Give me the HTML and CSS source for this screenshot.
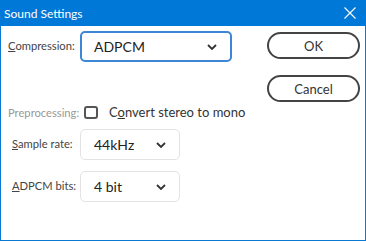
FILE: index.html
```html
<!DOCTYPE html>
<html lang="en">
<head>
  <meta charset="UTF-8">
  <title>Sound Settings</title>
  <link rel="stylesheet" href="styles.css">
</head>
<body>
  <div class="window">
    <div class="titlebar">
      <span class="title">Sound Settings</span>
      <svg class="close" width="12" height="12" viewBox="0 0 12 12">
        <path d="M0.5 0.5 L11.5 11.5 M11.5 0.5 L0.5 11.5" stroke="#fff" stroke-width="1.1" fill="none"/>
      </svg>
    </div>

    <div class="content">
      <div class="form">
        <div class="row row-compression">
          <span class="label"><u>C</u>ompression:</span>
          <div class="select select-focus">
            <span>ADPCM</span>
            <svg class="chevron" width="10" height="6" viewBox="0 0 10 6"><path d="M1 1 L5 5 L9 1" stroke="#333" stroke-width="1.8" fill="none"/></svg>
          </div>
        </div>

        <div class="row row-check">
          <span class="label label-disabled">Preprocessing:</span>
          <span class="checkbox"></span>
          <span class="check-text">C<u>o</u>nvert stereo to mono</span>
        </div>

        <div class="row row-rate">
          <span class="label label-indent"><u>S</u>ample rate:</span>
          <div class="select select-small">
            <span>44kHz</span>
            <svg class="chevron" width="10" height="6" viewBox="0 0 10 6"><path d="M1 1 L5 5 L9 1" stroke="#333" stroke-width="1.8" fill="none"/></svg>
          </div>
        </div>

        <div class="row row-bits">
          <span class="label label-indent"><u>A</u>DPCM bits:</span>
          <div class="select select-small">
            <span>4 bit</span>
            <svg class="chevron" width="10" height="6" viewBox="0 0 10 6"><path d="M1 1 L5 5 L9 1" stroke="#333" stroke-width="1.8" fill="none"/></svg>
          </div>
        </div>
      </div>

      <div class="buttons">
        <button class="btn">OK</button>
        <button class="btn">Cancel</button>
      </div>
    </div>
  </div>
</body>
</html>
```

FILE: styles.css
```css
html, body {
  margin: 0;
  padding: 0;
}

body {
  font-family: "Lato", "Open Sans", sans-serif;
  font-size: 12px;
  color: #333;
  background: #fff;
}

.window {
  width: 366px;
  height: 241px;
  box-sizing: border-box;
  border: 1px solid #0a79d1;
  border-top: none;
  display: flex;
  flex-direction: column;
}

.titlebar {
  height: 26px;
  margin: 0 -1px;
  background: #0078d7;
  color: #fff;
  display: flex;
  align-items: center;
  justify-content: space-between;
  padding: 0 10px 0 4px;
  font-size: 12px;
}

.close {
  display: block;
}

.content {
  display: flex;
  justify-content: space-between;
}

.form {
  display: flex;
  flex-direction: column;
  padding-top: 5px;
}

.row {
  display: flex;
}

.label {
  width: 72px;
  padding-left: 7px;
  padding-top: 8px;
  font-size: 11.2px;
  color: #444;
  white-space: nowrap;
}

.label-indent {
  padding-left: 11px;
  width: 68px;
}

.label-disabled {
  color: #999;
  padding-top: 0;
}

.select {
  box-sizing: border-box;
  display: flex;
  align-items: center;
  justify-content: space-between;
  padding: 0 13px 0 12px;
  font-size: 14px;
  color: #222;
  border-radius: 5px;
}

.select-focus {
  width: 152px;
  height: 31px;
  border: 2px solid #3d86d6;
}

.select-small {
  width: 100px;
  height: 31px;
  border: 1px solid #e3e3e3;
  padding-left: 13px;
}

.row-check {
  margin-top: 37px;
  height: 26px;
  align-items: center;
}

.checkbox {
  box-sizing: border-box;
  width: 14px;
  height: 13px;
  border: 2px solid #555;
  border-radius: 3px;
  margin-left: 4px;
}

.check-text {
  margin-left: 11px;
  font-size: 13px;
  color: #333;
  white-space: nowrap;
}

.row-rate {
  margin-top: 4px;
}

.row-bits {
  margin-top: 11px;
}

.buttons {
  display: flex;
  flex-direction: column;
  gap: 16px;
  padding: 6px 5px 0 0;
}

.btn {
  box-sizing: border-box;
  width: 93px;
  height: 27px;
  border: 2px solid #444;
  border-radius: 14px;
  background: #fff;
  font-family: inherit;
  font-size: 13px;
  color: #333;
  padding: 0;
}
```
